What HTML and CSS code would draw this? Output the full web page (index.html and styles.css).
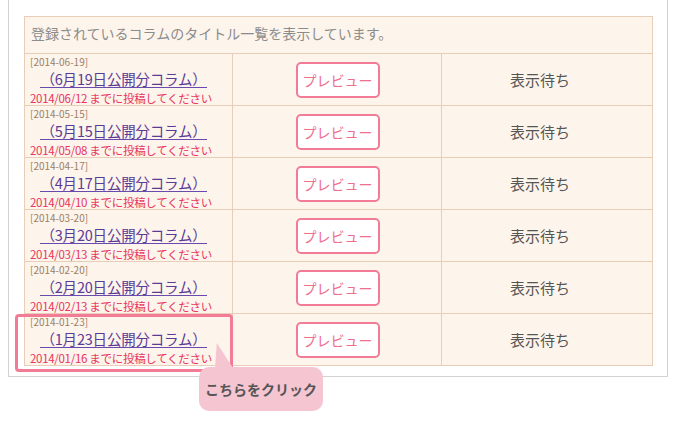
FILE: index.html
```html
<!DOCTYPE html>
<html lang="ja">
<head>
<meta charset="utf-8">
<link rel="stylesheet" href="styles.css">
</head>
<body>
<div class="panel">
  <table class="list">
    <colgroup><col class="c1"><col class="c2"><col class="c3"></colgroup>
    <tr><th colspan="3" class="head">登録されているコラムのタイトル一覧を表示しています。</th></tr>
    <tr>
      <td class="info"><div class="date">[2014-06-19]</div><a class="title">（6月19日公開分コラム）</a><div class="deadline">2014/06/12 までに投稿してください</div></td>
      <td class="act"><span class="btn">プレビュー</span></td>
      <td class="state">表示待ち</td>
    </tr>
    <tr>
      <td class="info"><div class="date">[2014-05-15]</div><a class="title">（5月15日公開分コラム）</a><div class="deadline">2014/05/08 までに投稿してください</div></td>
      <td class="act"><span class="btn">プレビュー</span></td>
      <td class="state">表示待ち</td>
    </tr>
    <tr>
      <td class="info"><div class="date">[2014-04-17]</div><a class="title">（4月17日公開分コラム）</a><div class="deadline">2014/04/10 までに投稿してください</div></td>
      <td class="act"><span class="btn">プレビュー</span></td>
      <td class="state">表示待ち</td>
    </tr>
    <tr>
      <td class="info"><div class="date">[2014-03-20]</div><a class="title">（3月20日公開分コラム）</a><div class="deadline">2014/03/13 までに投稿してください</div></td>
      <td class="act"><span class="btn">プレビュー</span></td>
      <td class="state">表示待ち</td>
    </tr>
    <tr>
      <td class="info"><div class="date">[2014-02-20]</div><a class="title">（2月20日公開分コラム）</a><div class="deadline">2014/02/13 までに投稿してください</div></td>
      <td class="act"><span class="btn">プレビュー</span></td>
      <td class="state">表示待ち</td>
    </tr>
    <tr>
      <td class="info"><div class="date">[2014-01-23]</div><a class="title">（1月23日公開分コラム）</a><div class="deadline">2014/01/16 までに投稿してください</div></td>
      <td class="act"><span class="btn">プレビュー</span></td>
      <td class="state">表示待ち</td>
    </tr>
  </table>
  <div class="highlight"></div>
  <div class="bubble">こちらをクリック</div>
</div>
</body>
</html>
```

FILE: styles.css
```css
html, body {
  margin: 0;
  padding: 0;
  background: #ffffff;
  font-family: "Noto Sans CJK JP", "Noto Sans", sans-serif;
}
body {
  min-height: 424px;
}
.panel {
  position: relative;
  margin-left: 8px;
  width: 660px;
  border: 1px solid #d2d2d2;
  border-top: none;
  padding: 16px 0 10px 15px;
  box-sizing: border-box;
}
.list {
  border-collapse: collapse;
  table-layout: fixed;
  width: 628px;
}
.c1 { width: 208px; }
.c2 { width: 209px; }
.c3 { width: 211px; }
.list th, .list td {
  border: 1px solid #e8cdb8;
  background: #fdf4eb;
  padding: 0;
}
.list th.head {
  height: 37px;
  text-align: left;
  font-weight: normal;
  font-size: 14px;
  color: #8c8c8c;
  padding: 0 0 4px 6px;
  box-sizing: border-box;
}
.list td.info {
  vertical-align: top;
  padding: 0 0 0 5px;
  height: 52px;
  box-sizing: border-box;
  white-space: nowrap;
  overflow: hidden;
}
.date {
  font-size: 10px;
  line-height: 16px;
  color: #9b7f66;
}
.title {
  display: block;
  margin-left: 10px;
  width: 167px;
  text-align: center;
  font-size: 14.5px;
  line-height: 17px;
  color: #5a3b98;
  border-bottom: 1px solid #6b4ab0;
  text-decoration: none;
  white-space: nowrap;
  letter-spacing: -0.2px;
}
.deadline {
  margin-top: 3px;
  font-size: 11.5px;
  line-height: 14px;
  letter-spacing: -0.3px;
  color: #e8345e;
  white-space: nowrap;
}
.act {
  text-align: center;
  vertical-align: middle;
}
.btn {
  display: inline-block;
  box-sizing: border-box;
  width: 84px;
  height: 36px;
  line-height: 32px;
  border: 2px solid #f27b95;
  border-radius: 5px;
  background: #ffffff;
  color: #ef6f8c;
  font-size: 14px;
  margin-left: 1px;
}
.list td.state {
  text-align: center;
  vertical-align: middle;
  font-size: 15px;
  color: #555555;
  padding: 0 14px 0 0;
}
.highlight {
  position: absolute;
  left: 6px;
  top: 314px;
  width: 218px;
  height: 58px;
  box-sizing: border-box;
  border: 3px solid #f27b95;
  border-radius: 4px;
}
.bubble {
  position: absolute;
  left: 190px;
  top: 367px;
  width: 124px;
  height: 44px;
  box-sizing: border-box;
  background: #f5c5d2;
  border-radius: 10px;
  color: #555555;
  font-weight: bold;
  font-size: 14px;
  line-height: 44px;
  text-align: center;
  z-index: 2;
}
.bubble::before {
  content: "";
  position: absolute;
  left: 16px;
  top: -24px;
  width: 18px;
  height: 25px;
  background: #f5c5d2;
  clip-path: polygon(10% 0, 0 100%, 100% 100%);
}
```
